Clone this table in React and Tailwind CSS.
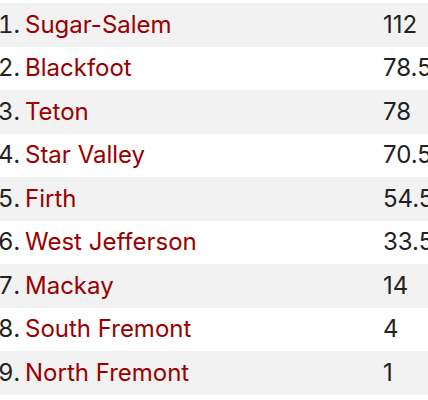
import React from 'react';

const teams = [
  { name: 'Sugar-Salem', points: '112' },
  { name: 'Blackfoot', points: '78.5' },
  { name: 'Teton', points: '78' },
  { name: 'Star Valley', points: '70.5' },
  { name: 'Firth', points: '54.5' },
  { name: 'West Jefferson', points: '33.5' },
  { name: 'Mackay', points: '14' },
  { name: 'South Fremont', points: '4' },
  { name: 'North Fremont', points: '1' },
];

const App = () => {
  return (
    <div className="w-[428px] h-[400px] overflow-hidden bg-white pt-[3px]" style={{ fontFamily: 'Inter, "Liberation Sans", sans-serif' }}>
      <div className="w-[460px] -ml-[2px]">
        {teams.map((team, i) => (
          <div
            key={team.name}
            className={`flex items-center h-[43.5px] text-[24px] text-[#222] ${i % 2 === 0 ? 'bg-[#f2f2f2]' : 'bg-white'}`}
          >
            <div className="w-[385px] flex whitespace-nowrap">
              <span className="w-[27px] shrink-0 tabular-nums">{i + 1}.</span>
              <span className="text-[#990000]">{team.name}</span>
            </div>
            <div className="whitespace-nowrap">{team.points}</div>
          </div>
        ))}
      </div>
    </div>
  );
};

export default App;
